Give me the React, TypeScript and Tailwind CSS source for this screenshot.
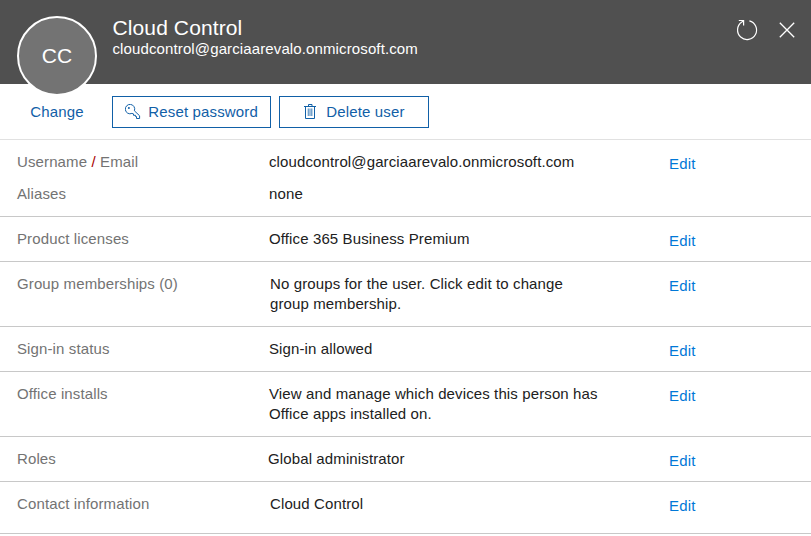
import React from "react";

type Row = {
  label: React.ReactNode;
  value: React.ReactNode;
  valueClass: string;
  rowClass?: string;
};

const rows: Row[] = [
  {
    label: (
      <>
        <div>
          Username <span className="text-[#a80000]">/</span> Email
        </div>
        <div className="mt-3">Aliases</div>
      </>
    ),
    value: (
      <>
        <div>cloudcontrol@garciaarevalo.onmicrosoft.com</div>
        <div className="mt-3">none</div>
      </>
    ),
    valueClass: "pl-px",
  },
  { label: "Product licenses", value: "Office 365 Business Premium", valueClass: "pl-px" },
  {
    label: "Group memberships (0)",
    value: (
      <>
        No groups for the user. Click edit to change
        <br />
        group membership.
      </>
    ),
    valueClass: "pl-0.5",
  },
  { label: "Sign-in status", value: "Sign-in allowed", valueClass: "pl-px" },
  {
    label: "Office installs",
    value: (
      <>
        View and manage which devices this person has
        <br />
        Office apps installed on.
      </>
    ),
    valueClass: "pl-px",
  },
  { label: "Roles", value: "Global administrator", valueClass: "pl-0" },
  {
    label: "Contact information",
    value: "Cloud Control",
    valueClass: "pl-0.5",
    rowClass: "pb-[19px]",
  },
];

function RefreshIcon() {
  return (
    <svg width="24" height="24" viewBox="0 0 24 24" fill="none" stroke="currentColor" strokeWidth="1.2">
      <path d="M14.4 2.8A9.5 9.5 0 1 1 6.8 4.1L8.6 2.8" />
      <path d="M3.8 2.5H8.6V7.4" />
    </svg>
  );
}

function CloseIcon() {
  return (
    <svg width="16" height="16" viewBox="0 0 16 16" fill="none" stroke="currentColor" strokeWidth="1.3">
      <path d="M.8.8L15.2 15.2M15.2.8L.8 15.2" />
    </svg>
  );
}

function KeyIcon() {
  return (
    <svg width="16" height="16" viewBox="0 0 16 16" fill="none" stroke="currentColor" strokeWidth="1">
      <path d="M9.4 6.8A4.7 4.7 0 1 0 6.9 9.4L8.5 9.9V11.3H10.5V12.5H11.5V14.5H14.6V11.8L9.4 6.8Z" />
      <circle cx="3.9" cy="3.9" r="1" fill="currentColor" stroke="none" />
    </svg>
  );
}

function TrashIcon() {
  return (
    <svg width="12" height="16" viewBox="0 0 12 16" fill="none" stroke="currentColor" strokeWidth="1">
      <path d="M0 2.5H12M4.5 2.5V.5H8V2.5M1.5 2.5V14.5H10.5V2.5" />
      <path d="M3.5 4.5H8.7V12H3.5Z" fill="currentColor" stroke="none" opacity=".4" />
      <path d="M4.5 4.5V12M7.5 4.5V12" opacity=".3" />
    </svg>
  );
}

export default function App() {
  return (
    <div className="h-[536px] w-[811px] overflow-hidden bg-white font-['Liberation_Sans',Arial,sans-serif] text-[15px] leading-5 tracking-[0.12px] text-[#212121]">
      <header className="flex h-[84px] bg-[#505050] text-white">
        <div className="relative z-10 mt-4 ml-[17px] flex size-20 shrink-0 items-center justify-center rounded-full border-2 border-white bg-[#737373] text-[21px] tracking-normal">
          CC
        </div>
        <div className="ml-[15.5px] pt-4">
          <h1 className="text-[21px] leading-6 tracking-[0.11px]">Cloud Control</h1>
          <p className="-mt-px">cloudcontrol@garciaarevalo.onmicrosoft.com</p>
        </div>
        <div className="mt-[18px] mr-4 ml-auto flex h-6 items-center gap-5">
          <button aria-label="Refresh"><RefreshIcon /></button>
          <button aria-label="Close"><CloseIcon /></button>
        </div>
      </header>

      <div className="flex h-14 items-start border-b border-[#e1e1e1] pt-3 tracking-[0.15px] text-[#1160a7]">
        <button className="h-8 w-28 pl-0.5">Change</button>
        <button className="flex h-8 w-[159px] items-center border border-[#1160a7] pl-3">
          <KeyIcon />
          <span className="ml-[7.3px]">Reset password</span>
        </button>
        <button className="ml-2 flex h-8 w-[150px] items-center border border-[#1160a7] pl-6">
          <TrashIcon />
          <span className="ml-[10.2px]">Delete user</span>
        </button>
      </div>

      <main>
        {rows.map((row, i) => (
          <section
            key={i}
            className={`flex border-b border-[#c8c8c8] pt-3 pl-[17px] ${row.rowClass ?? "pb-3"}`}
          >
            <div className="w-[251px] shrink-0 text-[#737373]">{row.label}</div>
            <div className={`w-[401px] shrink-0 ${row.valueClass}`}>{row.value}</div>
            <a className="-mb-0.5 h-5 pt-0.5 tracking-[0.2px] text-[#0078d7]">Edit</a>
          </section>
        ))}
      </main>
    </div>
  );
}
